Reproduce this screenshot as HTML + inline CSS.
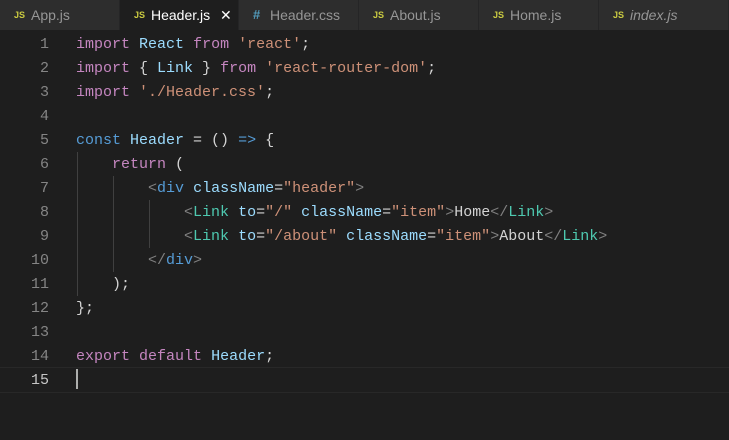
<!DOCTYPE html>
<html><head><meta charset="utf-8"><style>
*{margin:0;padding:0;box-sizing:border-box}
html,body{width:729px;height:440px;overflow:hidden}
body{background:#1e1e1e;font-family:"Liberation Mono",monospace;position:relative}
.tabs{position:absolute;top:0;left:0;width:729px;height:30px;background:#252526}
.tab{position:absolute;top:0;height:30px;background:#2d2d2d;color:#969696;font:14px "Liberation Sans",sans-serif;line-height:30px;border-right:1px solid #252526}
.tab .i{position:absolute;left:14px;top:0;font-size:9px;font-weight:bold;color:#cbcb41}
.tab .n{position:absolute;left:31px}
.tab.a{background:#1e1e1e;color:#fff}
.x{position:absolute;left:100px;color:#fff;font-size:14px}
.ln{position:absolute;left:0;width:49px;text-align:right;color:#858585;font-size:15px}
.cl{position:absolute;left:76px;color:#d4d4d4;font-size:15px}
.row{height:24px;line-height:24px;white-space:pre}
.k{color:#c586c0}.v{color:#9cdcfe}.s{color:#ce9178}.b{color:#569cd6}.g{color:#808080}.c{color:#4ec9b0}
.guide{position:absolute;width:1px;background:#404040}
</style></head><body>
<div class="tabs">
<div class="tab" style="left:0;width:120px"><span class="i">JS</span><span class="n">App.js</span></div>
<div class="tab a" style="left:120px;width:119px"><span class="i">JS</span><span class="n">Header.js</span><span class="x">✕</span></div>
<div class="tab" style="left:239px;width:120px"><span class="i" style="color:#519aba;font-size:13px">#</span><span class="n">Header.css</span></div>
<div class="tab" style="left:359px;width:120px"><span class="i">JS</span><span class="n">About.js</span></div>
<div class="tab" style="left:479px;width:120px"><span class="i">JS</span><span class="n">Home.js</span></div>
<div class="tab" style="left:599px;width:130px"><span class="i">JS</span><span class="n" style="font-style:italic">index.js</span></div>
</div>
<div style="position:absolute;left:0;top:367px;width:729px;height:26px;border-top:1px solid #282828;border-bottom:1px solid #282828"></div>
<div class="guide" style="left:77px;top:152px;height:144px"></div>
<div class="guide" style="left:113px;top:176px;height:96px"></div>
<div class="guide" style="left:149px;top:200px;height:48px"></div>
<div class="ln" style="top:33px"><div class="row">1</div><div class="row">2</div><div class="row">3</div><div class="row">4</div><div class="row">5</div><div class="row">6</div><div class="row">7</div><div class="row">8</div><div class="row">9</div><div class="row">10</div><div class="row">11</div><div class="row">12</div><div class="row">13</div><div class="row">14</div><div class="row" style="color:#c6c6c6">15</div></div>
<div class="cl" style="top:33px">
<div class="row"><span class="k">import</span> <span class="v">React</span> <span class="k">from</span> <span class="s">'react'</span>;</div>
<div class="row"><span class="k">import</span> { <span class="v">Link</span> } <span class="k">from</span> <span class="s">'react-router-dom'</span>;</div>
<div class="row"><span class="k">import</span> <span class="s">'./Header.css'</span>;</div>
<div class="row"> </div>
<div class="row"><span class="b">const</span> <span class="v">Header</span> = () <span class="b">=&gt;</span> {</div>
<div class="row">    <span class="k">return</span> (</div>
<div class="row">        <span class="g">&lt;</span><span class="b">div</span> <span class="v">className</span>=<span class="s">"header"</span><span class="g">&gt;</span></div>
<div class="row">            <span class="g">&lt;</span><span class="c">Link</span> <span class="v">to</span>=<span class="s">"/"</span> <span class="v">className</span>=<span class="s">"item"</span><span class="g">&gt;</span>Home<span class="g">&lt;/</span><span class="c">Link</span><span class="g">&gt;</span></div>
<div class="row">            <span class="g">&lt;</span><span class="c">Link</span> <span class="v">to</span>=<span class="s">"/about"</span> <span class="v">className</span>=<span class="s">"item"</span><span class="g">&gt;</span>About<span class="g">&lt;/</span><span class="c">Link</span><span class="g">&gt;</span></div>
<div class="row">        <span class="g">&lt;/</span><span class="b">div</span><span class="g">&gt;</span></div>
<div class="row">    );</div>
<div class="row">};</div>
<div class="row"> </div>
<div class="row"><span class="k">export</span> <span class="k">default</span> <span class="v">Header</span>;</div>
<div class="row"> </div>
</div>
<div style="position:absolute;left:76px;top:369px;width:2px;height:20px;background:#aeafad"></div>
</body></html>
